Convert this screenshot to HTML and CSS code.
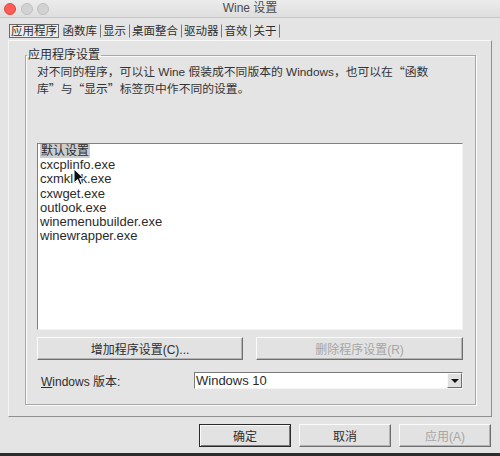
FILE: index.html
```html
<!DOCTYPE html>
<html lang="zh-CN">
<head>
<meta charset="utf-8">
<title>Wine 设置</title>
<link rel="stylesheet" href="styles.css">
</head>
<body>
<div class="window">
  <div class="titlebar">
    <div class="lights"><span class="light red"></span><span class="light"></span><span class="light"></span></div>
    <div class="title">Wine 设置</div>
    <div></div>
  </div>
  <div class="tabs">
    <span class="tab active">应用程序</span>
    <span class="tab">函数库</span>
    <span class="tab">显示</span>
    <span class="tab">桌面整合</span>
    <span class="tab">驱动器</span>
    <span class="tab">音效</span>
    <span class="tab">关于</span>
  </div>
  <div class="panel">
    <fieldset class="group">
      <legend>应用程序设置</legend>
      <p class="desc">对不同的程序，可以让 Wine 假装成不同版本的 Windows，也可以在<span class="q">“</span>函数<br>库<span class="q">”</span>与<span class="q">“</span>显示<span class="q">”</span>标签页中作不同的设置。</p>
      <ul class="list">
        <li><span class="sel">默认设置</span></li>
        <li>cxcplinfo.exe</li>
        <li>cxmklnk.exe</li>
        <li>cxwget.exe</li>
        <li>outlook.exe</li>
        <li>winemenubuilder.exe</li>
        <li>winewrapper.exe</li>
      </ul>
      <div class="btnrow">
        <button class="btn">增加程序设置(C)...</button>
        <button class="btn" disabled>删除程序设置(R)</button>
      </div>
      <div class="verrow">
        <label class="verlabel"><u>W</u>indows 版本:</label>
        <div class="combo"><span class="combo-text">Windows 10</span><span class="drop"><span class="tri"></span></span></div>
      </div>
    </fieldset>
  </div>
  <div class="footer">
    <button class="btn fbtn default">确定</button>
    <button class="btn fbtn">取消</button>
    <button class="btn fbtn" disabled>应用(A)</button>
  </div>
  <svg class="cursor" width="12" height="18" viewBox="0 0 12 18"><path d="M1 1 L1 15 L4.5 11.5 L7 17 L9 16 L6.6 10.6 L11 10.6 Z" fill="#111" stroke="#fff" stroke-width="1"/></svg>
</div>
</body>
</html>
```
FILE: styles.css
```css
html, body {
  margin: 0;
  padding: 0;
}
body {
  background: #2c2c2c;
  font-family: "Liberation Sans", "Noto Sans CJK SC", sans-serif;
  color: #333;
}
.window {
  position: relative;
  width: 500px;
  height: 453px;
  background: #e4e4e4;
  display: flex;
  flex-direction: column;
  overflow: hidden;
}
.titlebar {
  height: 17px;
  border-bottom: 1px solid #c6c6c6;
  background: linear-gradient(#ececec, #dedede);
  display: grid;
  grid-template-columns: 1fr auto 1fr;
  align-items: center;
}
.lights {
  display: flex;
  gap: 4.5px;
  padding-left: 4px;
}
.light {
  width: 10px;
  height: 10px;
  border-radius: 50%;
  background: #d2d2d2;
  border: 1px solid #c0c0c0;
}
.light.red {
  background: #fc5d55;
  border-color: #e2463f;
}
.title {
  font-size: 12px;
  color: #4b4b4b;
  line-height: 17px;
}
.tabs {
  display: flex;
  align-items: flex-start;
  height: 22px;
  box-sizing: border-box;
  padding: 6px 0 0 9px;
}
.tab {
  font-size: 11.5px;
  line-height: 12px;
  height: 12px;
  padding: 0 2.5px;
  border-top: 1px solid transparent;
  border-bottom: 1px solid transparent;
  border-right: 1px solid #7a7a7a;
  color: #2e2e2e;
}
.tab.active {
  border: 1px solid #6a6a6a;
  padding: 0 1px;
  margin-right: 1px;
  background: #ececec;
}
.panel {
  margin: 0 8px;
  border-top: 1px solid #f8f8f8;
  border-left: 1px solid #f4f4f4;
  border-right: 1px solid #8f8f8f;
  border-bottom: 1px solid #8f8f8f;
  padding: 7px 15px 11px 16px;
}
.group {
  margin: 0;
  min-width: 0;
  border: 1px solid #a8a8a8;
  box-shadow: 1px 1px 0 #fafafa, inset 1px 1px 0 #fafafa;
  padding: 0 12px 15px 11px;
}
.group legend {
  font-size: 12px;
  line-height: 14px;
  padding: 0 1px;
  margin-left: -10px;
  color: #2e2e2e;
}
.desc {
  margin: 1px 0 0;
  font-size: 11.8px;
  line-height: 15px;
  color: #333;
  white-space: nowrap;
}
.q {
  font-family: "Noto Sans CJK SC", sans-serif;
}
.list {
  list-style: none;
  margin: 46px 0 0;
  padding: 0 0 0 1px;
  height: 187px;
  box-sizing: border-box;
  background: #fff;
  border: 1px solid;
  border-color: #808080 #f2f2f2 #f2f2f2 #808080;
  font-size: 13px;
  line-height: 14.2px;
  color: #2b2b2b;
}
.list li {
  padding-left: 1px;
}
.sel {
  background: #cdcdcd;
  font-size: 12px;
  padding: 0 1px;
}
.btnrow {
  display: grid;
  grid-template-columns: 206px 207px;
  gap: 13px;
  margin-top: 7px;
}
.btn {
  height: 23px;
  margin: 0;
  padding: 0;
  font-family: "Liberation Sans", "Noto Sans CJK SC", sans-serif;
  font-size: 12px;
  color: #2e2e2e;
  background: #e2e2e2;
  border: 1px solid;
  border-color: #fbfbfb #6e6e6e #6e6e6e #fbfbfb;
  box-shadow: inset -1px -1px 0 #b4b4b4;
}
.btn:disabled {
  color: #a6a6a6;
}
.verrow {
  margin-top: 12px;
  display: grid;
  grid-template-columns: 157px 1fr;
  align-items: center;
  height: 17px;
}
.verlabel {
  padding-left: 4px;
  font-size: 12px;
  color: #2e2e2e;
}
.combo {
  height: 17px;
  box-sizing: border-box;
  background: #fff;
  border: 1px solid;
  border-color: #7a7a7a #f4f4f4 #f4f4f4 #7a7a7a;
  display: flex;
  justify-content: space-between;
  align-items: center;
}
.combo-text {
  font-size: 13px;
  padding-left: 1px;
  color: #2b2b2b;
}
.drop {
  width: 15px;
  height: 15px;
  box-sizing: border-box;
  background: #e0e0e0;
  border: 1px solid;
  border-color: #fafafa #6e6e6e #6e6e6e #fafafa;
  display: flex;
  align-items: center;
  justify-content: center;
}
.tri {
  width: 0;
  height: 0;
  border-left: 4px solid transparent;
  border-right: 4px solid transparent;
  border-top: 4px solid #111;
}
.footer {
  display: flex;
  justify-content: flex-end;
  gap: 8px;
  padding-right: 9px;
  margin-top: 7px;
}
.fbtn {
  width: 92px;
}
.fbtn.default {
  border: 1px solid #2a2a2a;
  box-shadow: inset 1px 1px 0 #fbfbfb, inset -1px -1px 0 #7a7a7a;
}
.cursor {
  position: absolute;
  left: 73px;
  top: 168px;
}
```
